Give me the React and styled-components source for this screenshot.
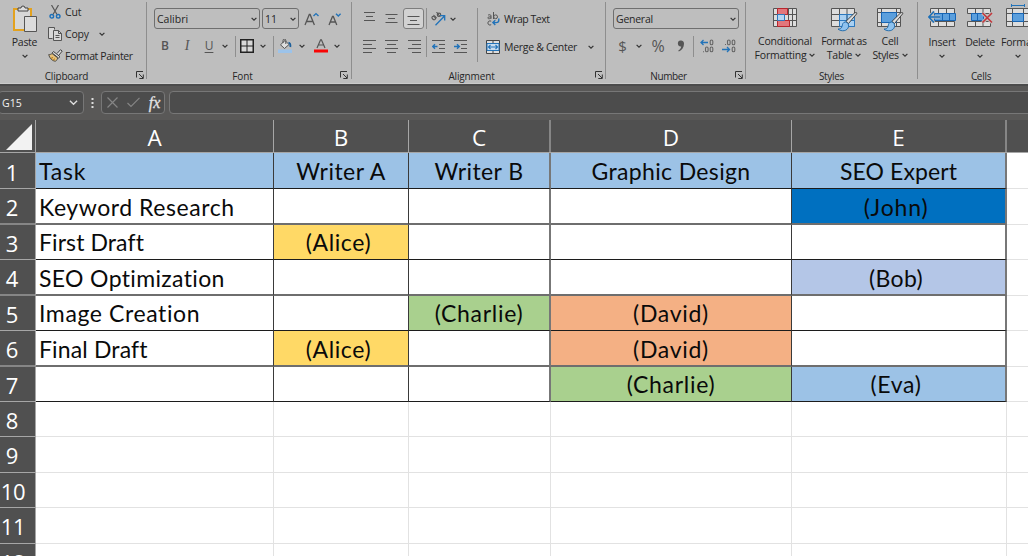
import React from "react";
import styled, { createGlobalStyle } from "styled-components";

const Global = createGlobalStyle`
  * { box-sizing: border-box; }
  body { margin: 0; overflow: hidden; background: #fff; }
`;

const ui = `"Open Sans", "Noto Sans", sans-serif`;

const Page = styled.div`
  width: 1028px;
  height: 556px;
  overflow: hidden;
  display: flex;
  flex-direction: column;
  font-family: ${ui};
`;

/* ---------- ribbon ---------- */
const Ribbon = styled.header`
  display: flex;
  flex: none;
  height: 84px;
  background: #bebebe;
  color: #262626;
  font-size: 10.5px;
  white-space: nowrap;
  border-bottom: 1px solid #cbcbcb;
`;
const Group = styled.section`
  flex: none;
  width: ${(p) => p.$w}px;
  display: flex;
  flex-direction: column;
`;
const Divider = styled.div`
  flex: none;
  width: 1px;
  height: ${(p) => p.$h || 77}px;
  margin-top: ${(p) => p.$top ?? 2}px;
  background: #8e8e8e;
`;
const Body = styled.div`
  display: flex;
  height: 67px;
  padding-left: ${(p) => p.$left || 0}px;
`;
const Footer = styled.div`
  display: flex;
  align-items: center;
  height: 16px;
  padding-right: ${(p) => p.$right || 0}px;
`;
const Caption = styled.span`
  flex: 1;
  text-align: center;
  font-size: 10px;
  line-height: 14px;
  padding-top: 2px;
  letter-spacing: ${(p) => p.$ls ?? -0.15}px;
  padding-right: ${(p) => p.$shift || 0}px;
`;
const Lines = styled.div`
  display: flex;
  flex-direction: column;
  padding-top: ${(p) => p.$top || 0}px;
`;
const Line = styled.div`
  display: flex;
  align-items: center;
  height: ${(p) => p.$h}px;
`;
const Slot = styled.span`
  flex: none;
  width: ${(p) => p.$w}px;
  height: 20px;
  display: flex;
  align-items: center;
  justify-content: center;
  svg { flex: none; }
`;
const Text = styled.span`
  letter-spacing: ${(p) => p.$ls || 0}px;
  line-height: 14px;
  margin-left: ${(p) => p.$ml || 0}px;
  margin-right: ${(p) => p.$mr || 0}px;
`;
const Rule = styled.span`
  flex: none;
  width: 1px;
  height: 21px;
  background: #8e8e8e;
`;
const Glyph = styled.span`
  color: #555;
  font-size: ${(p) => p.$size || 13}px;
  font-weight: ${(p) => p.$weight || 400};
  font-style: ${(p) => p.$style || "normal"};
  font-family: ${(p) => p.$font || ui};
  text-decoration: ${(p) => p.$deco || "none"};
  text-underline-offset: 2px;
  line-height: 18px;
`;
const Combo = styled.div`
  width: ${(p) => p.$w}px;
  height: 21px;
  margin-right: 2px;
  padding: 0 2px 0 2px;
  border: 1px solid #6f6f6f;
  border-radius: 3px;
  display: flex;
  align-items: center;
  justify-content: space-between;
`;
const Pressed = styled.span`
  flex: none;
  width: 21px;
  height: 21px;
  border: 1px solid #7d7d7d;
  border-radius: 3px;
  background: #d2d2d2;
  display: flex;
  align-items: center;
  justify-content: center;
`;
const BigButton = styled.div`
  flex: none;
  width: ${(p) => p.$w}px;
  padding-top: ${(p) => p.$top ?? 6}px;
  display: flex;
  flex-direction: column;
  align-items: center;
  svg { flex: none; }
`;
const BigLabel = styled.div`
  display: flex;
  align-items: center;
  justify-content: center;
  gap: 3px;
  height: 14px;
  line-height: 14px;
  letter-spacing: ${(p) => p.$ls ?? -0.2}px;
  margin-top: ${(p) => p.$mt || 0}px;
`;

const Chevron = ({ c = "#333", w = 6 }) => (
  <svg width={w} height={w} viewBox="0 0 6 6" fill="none" stroke={c} strokeWidth={w > 6 ? 0.9 : 1.2}>
    <path d="M.6 1.8 3 4.2 5.4 1.8" />
  </svg>
);
const Launcher = () => (
  <svg width="8" height="8" viewBox="0 0 8 8" fill="none" stroke="#333">
    <path d="M.5 6.5V.5H7M3 3l4 4M7.3 3.5v4h-4" />
  </svg>
);
const PasteIcon = () => (
  <svg width="24" height="27" viewBox="0 0 24 27" fill="none">
    <path d="M1 4h17v21H1z" fill="#d7d7d7" stroke="#e3a21f" strokeWidth="2" />
    <path d="M5 6V3h3a2 2 0 0 1 4 0h3v3z" fill="#ddd" stroke="#444" />
    <path d="M11.5 11.5h12v15h-12z" fill="#dcdcdc" stroke="#555" />
  </svg>
);
const CutIcon = () => (
  <svg width="12" height="14" viewBox="0 0 12 14" fill="none">
    <path d="M2.5 0 8 9.5M9.5 0 4 9.5" stroke="#555" strokeWidth="1.2" />
    <circle cx="2.8" cy="11.3" r="1.8" stroke="#1b6fb8" strokeWidth="1.4" />
    <circle cx="9.2" cy="11.3" r="1.8" stroke="#1b6fb8" strokeWidth="1.4" />
  </svg>
);
const CopyIcon = () => (
  <svg width="14" height="14" viewBox="0 0 14 14" fill="#d8d8d8" stroke="#555">
    <path d="M4.5 11.5h-4V.5h6v2" />
    <path d="M5.5 3.5h5l3 3v7h-8z" />
    <path d="M10.5 3.5v3h3M7.5 8.5h4M7.5 10.5h4" fill="none" />
  </svg>
);
const BrushIcon = () => (
  <svg width="15" height="13" viewBox="0 0 15 13">
    <path d="M9 4.5 12.5.7l1.7 1.4L11 6" fill="#ddd" stroke="#444" />
    <path d="M5.5 2.5 12 7.7 10.5 9 4.2 4z" fill="#ddd" stroke="#444" />
    <path d="M4 4.5C3 5.5 2 5.5.7 5.6 1.5 9 4 12 7.5 12.3c1-1 2-2 2.3-3.3z" fill="#e6c078" stroke="#444" strokeWidth=".9" />
    <path d="M3 9.3 5 8.5M5 11.2l2-1.5" stroke="#b97a10" />
  </svg>
);
const FontSizeIcon = ({ up }) => (
  <svg width="16" height="16" viewBox="0 0 16 16" fill="none">
    <path d={up ? "M1 14 5.3 3.5h.8L10.4 14M2.8 10.5h5.9" : "M2 14 5.5 5.5h.8L9.8 14M3.5 11h4.9"} stroke="#555" strokeWidth="1.3" />
    <path d={up ? "M9.5 5 12 2.6 14.5 5" : "M9 2.8 11.3 5 13.6 2.8"} stroke="#2273b9" strokeWidth="1.4" />
  </svg>
);
const BordersIcon = () => (
  <svg width="14" height="14" viewBox="0 0 14 14" fill="#d8d8d8" stroke="#222">
    <rect x=".75" y=".75" width="12.5" height="12.5" strokeWidth="1.5" />
    <path d="M7 1v12M1 7h12" />
  </svg>
);
const FillIcon = () => (
  <svg width="15" height="14" viewBox="0 0 15 14" fill="none">
    <path d="M7 1.5 11 5.5 6.5 9.5 2.5 5.8z" fill="#ddd" stroke="#555" />
    <path d="M5 4V1.5a1.4 1.4 0 0 1 2.8 0V5" stroke="#555" />
    <path d="M10.5 3.5c2 .5 2.2 2 1.8 4.5" stroke="#1c5f9b" strokeWidth="1.8" />
    <path d="M0 10.5h14V14H0z" fill="#9cc3ea" />
  </svg>
);
const FontColorIcon = () => (
  <svg width="14" height="14" viewBox="0 0 14 14" fill="none">
    <path d="M3 9 6.6.8h.8L11 9M4.4 6h5.2" stroke="#555" strokeWidth="1.2" />
    <path d="M0 10.5h14v3H0z" fill="#f80606" />
  </svg>
);
const AlignIcon = ({ lines }) => (
  <svg width="13" height="13" viewBox="0 0 13 13" stroke="#555" strokeWidth="1">
    {lines.map(([x1, x2, y]) => (
      <path key={y} d={`M${x1} ${y}H${x2}`} />
    ))}
  </svg>
);
const OrientationIcon = () => (
  <svg width="15" height="14" viewBox="0 0 15 14" fill="none">
    <g stroke="#555" strokeWidth="1.1">
      <ellipse cx="2.7" cy="6" rx="1.9" ry="1.4" transform="rotate(45 2.7 6)" />
      <path d="M2.3 3.3C3.5 3 4 4 5.6 6.3M5.5 0 8.500 4" />
      <ellipse cx="8" cy="2.8" rx="1.7" ry="1.7" />
    </g>
    <path d="M4.5 13.3 13.3 4.3M9 3.7h4.7v4.7" stroke="#2273b9" strokeWidth="1.3" />
  </svg>
);
const IndentIcon = ({ right }) => (
  <svg width="13" height="13" viewBox="0 0 13 13" fill="none">
    <path d="M0 .5h13M7 4.5h6M7 8.5h6M0 12.5h13" stroke="#555" />
    <path d={right ? "M0 6.5h5M3 4.2 5.3 6.5 3 8.8" : "M5.5 6.5H.7M3 4.2.7 6.5 3 8.8"} stroke="#2273b9" strokeWidth="1.4" />
  </svg>
);
const WrapIcon = () => (
  <svg width="13" height="14" viewBox="0 0 13 14" fill="none">
    <g stroke="#555" strokeWidth="1">
      <path d="M1 3.2c1-.8 3-.6 3 .6v3M4 5c-1.5-.3-3.2 0-3.2 1S3.5 7 4 5.800M6.5 0v7" />
      <circle cx="8.6" cy="4.8" r="1.9" />
      <path d="M4.2 9.2C2.5 8.3.9 9.3.9 11s1.6 2.6 3.3 1.7" />
    </g>
    <path d="M11.8 6.5v1.8c0 1.7-1 2.3-2.5 2.3H6M8.3 8.2 5.9 10.6 8.3 13" stroke="#2273b9" strokeWidth="1.4" />
  </svg>
);
const MergeIcon = () => (
  <svg width="14" height="14" viewBox="0 0 14 14" fill="none">
    <path d="M.5.5h13v13H.5z" fill="#ddd" stroke="#444" />
    <path d="M7 1v3M7 10v3" stroke="#444" />
    <path d="M1 3.5h12v7H1z" fill="#c8dcee" stroke="#2273b9" />
    <path d="M2.5 7h9M4.5 5 2.5 7l2 2M9.5 5l2 2-2 2" stroke="#2273b9" strokeWidth="1.1" />
  </svg>
);
const DecimalIcon = ({ more }) => (
  <svg width="14" height="14" viewBox="0 0 14 14" fill="none">
    <g stroke="#666" strokeWidth="1.1">
      {more ? (
        <>
          <rect x="10.2" y="1" width="2.6" height="4.8" rx="1.3" />
          <rect x="5.5" y="8" width="2.6" height="4.8" rx="1.3" />
          <rect x="10.2" y="8" width="2.6" height="4.8" rx="1.3" />
          <path d="M3 12.7h1" />
        </>
      ) : (
        <>
          <rect x="5.5" y="1" width="2.6" height="4.8" rx="1.3" />
          <rect x="10.2" y="1" width="2.6" height="4.8" rx="1.3" />
          <rect x="10.2" y="8" width="2.6" height="4.8" rx="1.3" />
          <path d="M3 5.5h1" />
        </>
      )}
    </g>
    <path d={more ? "M8 3.5H1M3.5 1 1 3.5 3.5 6" : "M0 10.5h7.5M5 8l2.5 2.5L5 13"} stroke="#2273b9" strokeWidth="1.3" />
  </svg>
);
const CommaIcon = () => (
  <svg width="8" height="12" viewBox="0 0 8 12" fill="#555">
    <path d="M3.6.5A3 3 0 0 1 7 3.7C7 7.5 5 10 1.8 11.5L1.3 10.6C3 9.5 4 8.2 4.2 6.5A3 3 0 1 1 3.6.5z" />
  </svg>
);
const CondIcon = () => (
  <svg width="24" height="19" viewBox="0 0 24 19" fill="none">
    <path d="M.5.5h23v18H.5z" fill="#ddd" stroke="#555" />
    <path d="M4.5 0v19M15.5 0v19M19.5 0v19M0 6.5h24M0 12.5h24" stroke="#555" />
    <path d="M4.5.5h10v6h-10zM4.5 12.5h12v6h-12z" fill="#e2777c" stroke="#b8262d" />
    <path d="M4.5 6.5h7v6h-7z" fill="#b5d5f2" stroke="#2b78be" />
  </svg>
);
const BrushOverlay = () => (
  <>
    <path d="M25.5 6 17.5 15.5 14.8 13.5 23.3 5.2C25 4 26.5 4.5 25.5 6z" fill="#ddd" stroke="#333" strokeWidth=".9" />
    <path d="M14.5 14C12 14 11.5 16 11 18.5c-.5 2-2 2.5-4 2.6 3.5 2.7 9.5 2.3 10.6-2.6.3-2-1-4.3-3.1-4.500z" fill="#8fc2ee" stroke="#1765a8" strokeWidth=".9" />
  </>
);
const TableIcon = () => (
  <svg width="27" height="24" viewBox="0 0 27 24" fill="none">
    <path d="M.5.5h23v18H.5z" fill="#ddd" stroke="#555" />
    <path d="M8.5 6.5h15v12h-15z" fill="#a9d0f2" />
    <path d="M8.5 0v19M16 0v19M0 6.5h24M0 12.5h24" stroke="#555" />
    <path d="M8.5 6.5h15v12h-15zM16 6.5v12M8.5 12.5h15" stroke="#2b78be" />
    <BrushOverlay />
  </svg>
);
const CellStylesIcon = () => (
  <svg width="27" height="24" viewBox="0 0 27 24" fill="none">
    <path d="M.5.5h23v18H.5z" fill="#ddd" stroke="#555" />
    <path d="M4.5 0v19M19.5 0v19M0 4.5h24M0 14.5h24" stroke="#555" />
    <path d="M4.5 4.5h15v10h-15z" fill="#5b9fdd" stroke="#1765b5" />
    <BrushOverlay />
  </svg>
);
const InsertIcon = () => (
  <svg width="28" height="19" viewBox="0 0 28 19" fill="none">
    <path d="M2.5.5h24v5h-24zM2.5 13.5h24v5h-24z" fill="#ddd" stroke="#555" />
    <path d="M10.5.5v5M18.5.5v5M10.5 13.5v5M18.5 13.5v5" stroke="#555" />
    <path d="M6.5 5.5h21v7h-21z" fill="#5b9fdd" stroke="#1765b5" />
    <path d="M14.5 5.5v7M21.5 5.5v7" stroke="#1765b5" />
    <path d="M6 3.5.8 9 6 14.5M1 9h11" stroke="#bebebe" strokeWidth="3" />
    <path d="M6 3.5.8 9 6 14.5M1 9h11" stroke="#1b6fb8" strokeWidth="1.5" />
  </svg>
);
const DeleteIcon = () => (
  <svg width="26" height="19" viewBox="0 0 26 19" fill="none">
    <path d="M.5.5h23v5H.5zM.5 13.5h23v5H.5z" fill="#ddd" stroke="#555" />
    <path d="M8.5.5v5M16 .5v5M8.5 13.5v5M16 13.5v5" stroke="#555" />
    <path d="M4.5 5.5h12v7h-12z" fill="#5b9fdd" stroke="#1765b5" />
    <path d="M10.5 5.5v7" stroke="#1765b5" />
    <path d="M15.5 5 25 14.5M25 5 15.5 14.5" stroke="#bebebe" strokeWidth="3.5" />
    <path d="M15.5 5 25 14.5M25 5 15.5 14.5" stroke="#c4373c" strokeWidth="1.6" />
  </svg>
);
const FormatIcon = () => (
  <svg width="24" height="23" viewBox="0 0 24 23" fill="none">
    <path d="M5.5 0v3M18.5 0v3M5.5 1.5h13" stroke="#2273b9" />
    <path d="M.5 4.5h23v18H.5z" fill="#ddd" stroke="#555" />
    <path d="M6.5 4v19M17.5 4v19M0 9.5h24M0 17.5h24" stroke="#555" />
    <path d="M6.5 9.5h11v8h-11z" fill="#5b9fdd" stroke="#1765b5" />
  </svg>
);

const vAlign = {
  top: [[1, 12, 0.5], [3, 10, 4.5], [1, 12, 8.5]],
  middle: [[0.5, 12.5, 2.5], [3, 10, 6.5], [0.5, 12.5, 10.5]],
  bottom: [[0.5, 12.5, 4.5], [3, 10, 8.5], [0.5, 12.5, 12.5]],
};
const hAlign = {
  left: [[0, 13, 0.5], [0, 9, 4.5], [0, 13, 8.5], [0, 9, 12.5]],
  center: [[0, 13, 0.5], [2, 11, 4.5], [0, 13, 8.5], [2, 11, 12.5]],
  right: [[0, 13, 0.5], [4, 13, 4.5], [0, 13, 8.5], [4, 13, 12.5]],
};

/* ---------- formula bar ---------- */
const FormulaBar = styled.div`
  flex: none;
  display: flex;
  align-items: flex-start;
  height: 36px;
  padding-top: 5px;
  background: #595857;
  border-top: 2px solid #4b4b4b;
  color: #f2f2f2;
`;
const Field = styled.div`
  flex: none;
  display: flex;
  align-items: center;
  height: 23px;
  width: ${(p) => p.$w}px;
  margin-left: ${(p) => p.$ml || 0}px;
  background: #4c4c4c;
  border: 1px solid #777;
  border-radius: 4px;
`;
const NameField = styled(Field)`
  justify-content: space-between;
  padding: 0 5px 0 3px;
  font-size: 10.5px;
  font-weight: 500;
`;
const Dots = styled.div`
  flex: none;
  width: 17px;
  height: 23px;
  display: flex;
  align-items: center;
  justify-content: center;
`;
const Fx = styled.span`
  font: italic 400 16px "Liberation Serif", serif;
  -webkit-text-stroke: 0.3px;
  color: #e4e4e4;
`;

/* ---------- sheet ---------- */
const Sheet = styled.main`
  flex: none;
  display: flex;
  flex-direction: column;
`;
const COLS = "36px 238px 135px 142px 241px 215px 1fr";
const HeadRow = styled.div`
  display: grid;
  grid-template-columns: ${COLS};
  grid-template-rows: 100%;
  height: 33px;
  background: #505050;
  border-bottom: 1px solid #a6a6a6;
`;
const ColHead = styled.div`
  border-right: ${(p) => (p.$soft ? "2px solid #868686" : "1px solid #a6a6a6")};
  color: #fff;
  font-size: 22.5px;
  line-height: 35px;
  text-align: center;
  &:last-child { border-right: 0; }
`;
const Corner = styled.div`
  border-right: 1px solid #a6a6a6;
  padding: 4px 0 0 6px;
`;
const Row = styled.div`
  display: grid;
  grid-template-columns: ${COLS};
  grid-template-rows: 100%;
  height: ${(p) => p.$h}px;
`;
const RowHead = styled.div`
  background: #505050;
  border-right: 1px solid #a6a6a6;
  border-bottom: ${(p) => (p.$soft ? "2px solid #868686" : "1px solid #a6a6a6")};
  color: #fff;
  font-size: 22px;
  line-height: ${(p) => p.$lh}px;
  text-align: center;
  padding-right: ${(p) => (p.$wide ? 9 : 11)}px;
  letter-spacing: -0.3px;
`;
const Cell = styled.div`
  background: ${(p) => p.$bg || "#fff"};
  border-right: ${(p) => p.$rw}px solid ${(p) => p.$rc};
  border-bottom: ${(p) => p.$bw}px solid ${(p) => p.$bc};
  color: #0a0a0a;
  font-family: Lato, "Open Sans", sans-serif;
  font-size: 23px;
  letter-spacing: ${(p) => p.$ls ?? 0.4}px;
  line-height: ${(p) => p.$lh}px;
  text-align: ${(p) => (p.$left ? "left" : "center")};
  padding-left: ${(p) => (p.$left ? 3 : 0)}px;
  padding-right: ${(p) => p.$pad || 0}px;
  white-space: nowrap;
`;

const BLUE = "#9cc2e6";
const YELLOW = "#ffd966";
const GREEN = "#a9d08e";
const ORANGE = "#f4b084";
/* cell: [text, fill, tracking, trailing pad] */
const ROWS = [
  { h: 36, lh: 37, cells: [["Task", BLUE, 0.8], ["Writer A", BLUE, 0.5], ["Writer B", BLUE, 0.4], ["Graphic Design", BLUE, 0.35], ["SEO Expert", BLUE, 0.1]] },
  { h: 36, soft: true, cells: [["Keyword Research", , 0.55], [], [], [], ["(John)", "#0070c0", 0.8, 5]] },
  { h: 35, lh: 35, cells: [["First Draft", , 0.1], ["(Alice)", YELLOW, 0.6, 5], [], [], []] },
  { h: 36, soft: true, cells: [["SEO Optimization", , 0.35], [], [], [], ["(Bob)", "#b4c6e7", 0.4, 5]] },
  { h: 35, lh: 35, cells: [["Image Creation", , 0.6], [], ["(Charlie)", GREEN, 0.7], ["(David)", ORANGE, 0.7], []] },
  { h: 36, soft: true, cells: [["Final Draft", , 0.15], ["(Alice)", YELLOW, 0.6, 5], [], ["(David)", ORANGE, 0.7], []] },
  { h: 35, lh: 35, cells: [[], [], [], ["(Charlie)", GREEN, 0.7], ["(Eva)", BLUE, 0.7, 5]] },
  { h: 35 }, { h: 36 }, { h: 35 }, { h: 36 }, { h: 36 },
];

function SheetRow({ row, n }) {
  const filled = Boolean(row.cells);
  const cells = row.cells || [[], [], [], [], []];
  const lh = row.lh || 36;
  return (
    <Row $h={row.h}>
      <RowHead $soft={row.soft} $wide={n > 9} $lh={lh + 1}>{n}</RowHead>
      {cells.map(([text, bg, ls, pad], i) => {
        const softCol = i === 2 || i === 4;
        return (
          <Cell
            key={i}
            $bg={bg}
            $ls={ls}
            $pad={pad}
            $lh={lh}
            $left={i === 0}
            $rw={filled && softCol ? 2 : 1}
            $rc={filled ? (softCol ? "#777" : "#3a3a3a") : "#e2e2e2"}
            $bw={filled && row.soft ? 2 : 1}
            $bc={filled ? (row.soft ? "#6e6e6e" : "#1c1c1c") : "#e2e2e2"}
          >
            {text}
          </Cell>
        );
      })}
      <Cell $rw={0} $rc="#e2e2e2" $bw={1} $bc="#e2e2e2" />
    </Row>
  );
}

export default function App() {
  return (
    <Page>
      <Global />
      <Ribbon>
        <Group $w={146}>
          <Body>
            <BigButton $w={49} $top={5}>
              <PasteIcon />
              <BigLabel $mt={3} $ls={-0.3}>Paste</BigLabel>
              <BigLabel><Chevron /></BigLabel>
            </BigButton>
            <Lines $top={1}>
              <Line $h={23}><Slot $w={12}><CutIcon /></Slot><Text $ml={4} $ls={-0.1}>Cut</Text></Line>
              <Line $h={22}><Slot $w={12}><CopyIcon /></Slot><Text $ml={4} $mr={10} $ls={-0.2}>Copy</Text><Chevron /></Line>
              <Line $h={24}><Slot $w={12}><BrushIcon /></Slot><Text $ml={4} $ls={-0.4}>Format Painter</Text></Line>
            </Lines>
          </Body>
          <Footer $right={2}><Caption $shift={3} $ls={-0.2}>Clipboard</Caption><Launcher /></Footer>
        </Group>
        <Divider />
        <Group $w={204}>
          <Body $left={7}>
            <Lines $top={8}>
              <Line $h={21}>
                <Combo $w={106}><Text>Calibri</Text><Chevron /></Combo>
                <Combo $w={37}><Text>11</Text><Chevron /></Combo>
                <Slot $w={22}><FontSizeIcon up /></Slot>
                <Slot $w={24}><FontSizeIcon /></Slot>
              </Line>
              <Line $h={34}>
                <Slot $w={22}><Glyph $weight={600} $size={12}>B</Glyph></Slot>
                <Slot $w={22}><Glyph $style="italic" $size={14} $font={'"Liberation Serif", serif'}>I</Glyph></Slot>
                <Slot $w={22}><Glyph $deco="underline" $size={12}>U</Glyph></Slot>
                <Slot $w={10}><Chevron /></Slot>
                <Slot $w={10}><Rule /></Slot>
                <Slot $w={14}><BordersIcon /></Slot>
                <Slot $w={18}><Chevron /></Slot>
                <Slot $w={2}><Rule /></Slot>
                <Slot $w={22}><FillIcon /></Slot>
                <Slot $w={12}><Chevron /></Slot>
                <Slot $w={26}><FontColorIcon /></Slot>
                <Slot $w={6}><Chevron /></Slot>
              </Line>
            </Lines>
          </Body>
          <Footer $right={3}><Caption $shift={2}>Font</Caption><Launcher /></Footer>
        </Group>
        <Divider />
        <Group $w={253}>
          <Body $left={6}>
            <Lines $top={8}>
              <Line $h={21}>
                <Slot $w={22}><AlignIcon lines={vAlign.top} /></Slot>
                <Slot $w={23}><AlignIcon lines={vAlign.middle} /></Slot>
                <Pressed><AlignIcon lines={vAlign.bottom} /></Pressed>
                <Slot $w={4}><Rule /></Slot>
                <Slot $w={21}><OrientationIcon /></Slot>
                <Slot $w={8}><Chevron /></Slot>
              </Line>
              <Line $h={34}>
                <Slot $w={22}><AlignIcon lines={hAlign.left} /></Slot>
                <Slot $w={23}><AlignIcon lines={hAlign.center} /></Slot>
                <Slot $w={22}><AlignIcon lines={hAlign.right} /></Slot>
                <Slot $w={3}><Rule /></Slot>
                <Slot $w={21}><IndentIcon /></Slot>
                <Slot $w={23}><IndentIcon right /></Slot>
              </Line>
            </Lines>
            <Lines><Slot $w={10}><Divider $top={49} $h={54} /></Slot></Lines>
            <Lines $top={8}>
              <Line $h={22}><Slot $w={22}><WrapIcon /></Slot><Text $ls={-0.5}>Wrap Text</Text></Line>
              <Line $h={33}><Slot $w={22}><MergeIcon /></Slot><Text $mr={11} $ls={-0.3}>Merge & Center</Text><Chevron /></Line>
            </Lines>
          </Body>
          <Footer $right={2}><Caption $shift={4}>Alignment</Caption><Launcher /></Footer>
        </Group>
        <Divider />
        <Group $w={139}>
          <Body $left={7}>
            <Lines $top={8}>
              <Line $h={21}><Combo $w={126}><Text $ls={-0.25}>General</Text><Chevron /></Combo></Line>
              <Line $h={34}>
                <Slot $w={19}><Glyph $size={15}>$</Glyph></Slot>
                <Slot $w={14}><Chevron /></Slot>
                <Slot $w={24}><Glyph $size={16}>%</Glyph></Slot>
                <Slot $w={22}><CommaIcon /></Slot>
                <Slot $w={3}><Rule /></Slot>
                <Slot $w={23}><DecimalIcon more /></Slot>
                <Slot $w={22}><DecimalIcon /></Slot>
              </Line>
            </Lines>
          </Body>
          <Footer $right={2}><Caption $shift={4} $ls={-0.4}>Number</Caption><Launcher /></Footer>
        </Group>
        <Divider />
        <Group $w={171}>
          <Body $left={6}>
            <BigButton $w={66} $top={8}>
              <CondIcon />
              <BigLabel $mt={7}>Conditional</BigLabel>
              <BigLabel>Formatting <Chevron /></BigLabel>
            </BigButton>
            <BigButton $w={52} $top={8}>
              <TableIcon />
              <BigLabel $mt={2} $ls={-0.4}>Format as</BigLabel>
              <BigLabel>Table <Chevron /></BigLabel>
            </BigButton>
            <BigButton $w={40} $top={8}>
              <CellStylesIcon />
              <BigLabel $mt={2}>Cell</BigLabel>
              <BigLabel $ls={-0.35}>Styles <Chevron /></BigLabel>
            </BigButton>
          </Body>
          <Footer><Caption $ls={-0.3}>Styles</Caption></Footer>
        </Group>
        <Divider />
        <Group $w={126}>
          <Body $left={5}>
            <BigButton $w={38} $top={8}><InsertIcon /><BigLabel $mt={8}>Insert</BigLabel><BigLabel><Chevron /></BigLabel></BigButton>
            <BigButton $w={38} $top={8}><DeleteIcon /><BigLabel $mt={8} $ls={-0.4}>Delete</BigLabel><BigLabel><Chevron /></BigLabel></BigButton>
            <BigButton $w={38} $top={4}><FormatIcon /><BigLabel $mt={8}>Format</BigLabel><BigLabel><Chevron /></BigLabel></BigButton>
          </Body>
          <Footer><Caption $ls={-0.3}>Cells</Caption></Footer>
        </Group>
      </Ribbon>

      <FormulaBar>
        <NameField $w={86} $ml={-2}><span>G15</span><Chevron c="#ddd" w={9} /></NameField>
        <Dots>
          <svg width="3" height="10" viewBox="0 0 3 10" fill="#ddd"><path d="M.5 0h2v2h-2zM.5 4h2v2h-2zM.5 8h2v2h-2z" /></svg>
        </Dots>
        <Field $w={64}>
          <Slot $w={21}><svg width="11" height="11" viewBox="0 0 11 11" stroke="#858585" strokeWidth="1.2"><path d="M.5.5l10 10M10.5.5l-10 10" /></svg></Slot>
          <Slot $w={21}><svg width="13" height="11" viewBox="0 0 13 11" fill="none" stroke="#858585" strokeWidth="1.2"><path d="M.5 6 4 9.5 12.5.8" /></svg></Slot>
          <Slot $w={21}><Fx>fx</Fx></Slot>
        </Field>
        <Field $w={870} $ml={4} />
      </FormulaBar>

      <Sheet>
        <HeadRow>
          <Corner><svg width="26" height="26" viewBox="0 0 26 26"><path d="M26 0v26H0z" fill="#f2f2f2" /></svg></Corner>
          <ColHead>A</ColHead>
          <ColHead>B</ColHead>
          <ColHead $soft>C</ColHead>
          <ColHead>D</ColHead>
          <ColHead $soft>E</ColHead>
          <ColHead />
        </HeadRow>
        {ROWS.map((row, i) => <SheetRow key={i} row={row} n={i + 1} />)}
      </Sheet>
    </Page>
  );
}
